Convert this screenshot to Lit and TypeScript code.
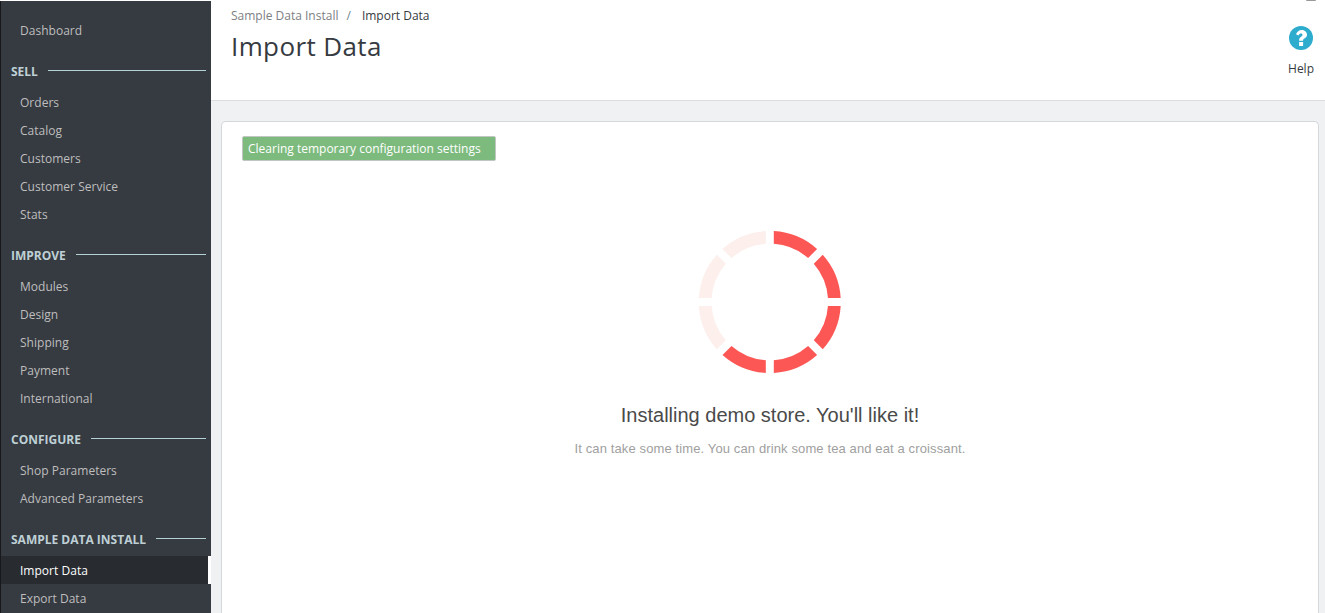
import { LitElement, html, css, svg } from "lit";
import { customElement, property } from "lit/decorators.js";
import { classMap } from "lit/directives/class-map.js";

interface NavGroup {
  title?: string;
  items: string[];
}

const GROUPS: NavGroup[] = [
  { items: ["Dashboard"] },
  { title: "Sell", items: ["Orders", "Catalog", "Customers", "Customer Service", "Stats"] },
  { title: "Improve", items: ["Modules", "Design", "Shipping", "Payment", "International"] },
  { title: "Configure", items: ["Shop Parameters", "Advanced Parameters"] },
  { title: "Sample Data Install", items: ["Import Data", "Export Data"] },
];

@customElement("side-nav")
class SideNav extends LitElement {
  @property() active = "";

  static styles = css`
    :host {
      display: block;
      box-sizing: border-box;
      width: 211px;
      height: 612px;
      margin-top: 1px;
      padding-top: 15px;
      overflow: hidden;
      flex: none;
      background: #363a41;
      border-left: 1px solid #17191c;
    }
    .title {
      display: flex;
      align-items: center;
      gap: 10px;
      height: 20px;
      margin: 17px 5px 7px 10px;
      padding: 0;
      font-size: 12px;
      font-weight: 700;
      line-height: 20px;
      color: #bed0d5;
      text-transform: uppercase;
      white-space: nowrap;
    }
    .title span {
      padding-top: 2px;
    }
    .title::after {
      content: "";
      flex: 1;
      height: 1px;
      margin-bottom: 2px;
      background: #b3d0d5;
    }
    .item {
      box-sizing: border-box;
      height: 28px;
      padding-left: 19px;
      font-size: 12px;
      line-height: 29px;
      letter-spacing: 0.02px;
      color: #bebebe;
      white-space: nowrap;
    }
    .active {
      color: #fff;
      background: #282b30;
      border-right: 3px solid #fff;
    }
  `;

  render() {
    return html`<nav>
      ${GROUPS.map(
        (g) => html`
          ${g.title ? html`<div class="title"><span>${g.title}</span></div>` : ""}
          ${g.items.map(
            (i) => html`<div class=${classMap({ item: true, active: i === this.active })}>${i}</div>`
          )}
        `
      )}
    </nav>`;
  }
}

@customElement("segment-loader")
class SegmentLoader extends LitElement {
  static styles = css`
    :host {
      display: block;
      width: 144px;
      height: 144px;
    }
    svg {
      display: block;
    }
    .on {
      fill: #fd5755;
    }
    .off {
      fill: #fcefec;
    }
  `;

  private segment(index: number) {
    const outer = 71;
    const inner = 58.3;
    const half = 4;
    const start = (index * Math.PI) / 4;
    const end = start + Math.PI / 4;
    const at = (r: number, a: number) => `${(r * Math.sin(a)).toFixed(2)} ${(-r * Math.cos(a)).toFixed(2)}`;
    const o = Math.asin(half / outer);
    const i = Math.asin(half / inner);
    return `M${at(outer, start + o)}A${outer} ${outer} 0 0 1 ${at(outer, end - o)}L${at(inner, end - i)}A${inner} ${inner} 0 0 0 ${at(inner, start + i)}Z`;
  }

  render() {
    return html`<svg width="144" height="144" viewBox="-71.8 -72 144 144">
      ${[0, 1, 2, 3, 4, 5, 6, 7].map((n) => svg`<path class=${n < 5 ? "on" : "off"} d=${this.segment(n)} />`)}
    </svg>`;
  }
}

@customElement("app-root")
class AppRoot extends LitElement {
  static styles = css`
    :host {
      display: flex;
      height: 613px;
      overflow: hidden;
      background: #fff;
      font-family: "Open Sans", sans-serif;
      font-size: 12px;
      color: #363a41;
    }
    .main {
      flex: 1;
      min-width: 0;
      display: flex;
      flex-direction: column;
      background: #eff1f2;
    }
    .head {
      box-sizing: border-box;
      height: 101px;
      flex: none;
      display: flex;
      justify-content: space-between;
      padding: 7px 11px 0 20px;
      background: #fff;
      border-bottom: 1px solid #dddddf;
    }
    .crumbs {
      display: flex;
      height: 18px;
      line-height: 18px;
      color: #7d7f83;
      white-space: nowrap;
    }
    .sep {
      margin: 0 11px 0 8px;
      color: #6c868e;
    }
    .here {
      color: #363a41;
    }
    h1 {
      margin: 3px 0 0;
      font-size: 26px;
      font-weight: 400;
      line-height: 36px;
      letter-spacing: 0.38px;
    }
    .help {
      display: flex;
      flex-direction: column;
      align-items: center;
      padding-top: 19px;
      line-height: 18px;
    }
    .help svg {
      display: block;
      margin-bottom: 10px;
    }
    .corner {
      position: absolute;
      top: 0;
      left: 1306px;
      width: 10px;
      height: 1px;
      border-radius: 0 0 3px 3px;
      background: #999;
    }
    .panel {
      box-sizing: border-box;
      flex: 1;
      display: flex;
      flex-direction: column;
      align-items: center;
      margin: 20px 6px 0 10px;
      padding: 14px 20px 0;
      background: #fff;
      border: 1px solid #d3d8db;
      border-bottom: 0;
      border-radius: 5px 5px 0 0;
    }
    .status {
      box-sizing: border-box;
      align-self: flex-start;
      width: 254px;
      height: 25px;
      padding-left: 5px;
      line-height: 24px;
      color: #fff;
      background: #7cba7d;
      border: 1px solid #c2c6c2;
      border-radius: 2px;
      white-space: nowrap;
    }
    segment-loader {
      margin-top: 69px;
    }
    .lead {
      margin-top: 29px;
      font: 20px/24px "Liberation Sans", Arial, sans-serif;
      color: #4a4a4a;
      white-space: nowrap;
    }
    .note {
      margin-top: 13px;
      font: 13px/18px "Liberation Sans", Arial, sans-serif;
      letter-spacing: 0.12px;
      color: #a0a0a0;
      white-space: nowrap;
    }
  `;

  render() {
    return html`
      <side-nav active="Import Data"></side-nav>
      <div class="main">
        <header class="head">
          <div>
            <div class="crumbs">
              <span>Sample Data Install</span><span class="sep">/</span><span class="here">Import Data</span>
            </div>
            <h1>Import Data</h1>
          </div>
          <div class="help">
            <svg width="24" height="24" viewBox="0 0 24 24">
              <circle cx="12" cy="12" r="12" fill="#2eacce" />
              <path
                d="M7 8.3C8.2 5.6 9.9 4 12.5 4c2.9 0 5.5 2 5.5 4.8 0 3.5-3.9 3.5-3.9 5.2v.8h-4V14c0-3.2 3.4-3.3 3.4-5.1 0-.9-.7-1.4-1.6-1.4-1.1 0-1.6.6-2.4 1.9Z"
                fill="#fff"
              />
              <rect x="10.1" y="16" width="4" height="4" fill="#fff" />
            </svg>
            <span>Help</span>
          </div>
        </header>
        <section class="panel">
          <div class="status">Clearing temporary configuration settings</div>
          <segment-loader></segment-loader>
          <div class="lead">Installing demo store. You'll like it!</div>
          <div class="note">It can take some time. You can drink some tea and eat a croissant.</div>
        </section>
      </div>
      <div class="corner"></div>
    `;
  }
}
